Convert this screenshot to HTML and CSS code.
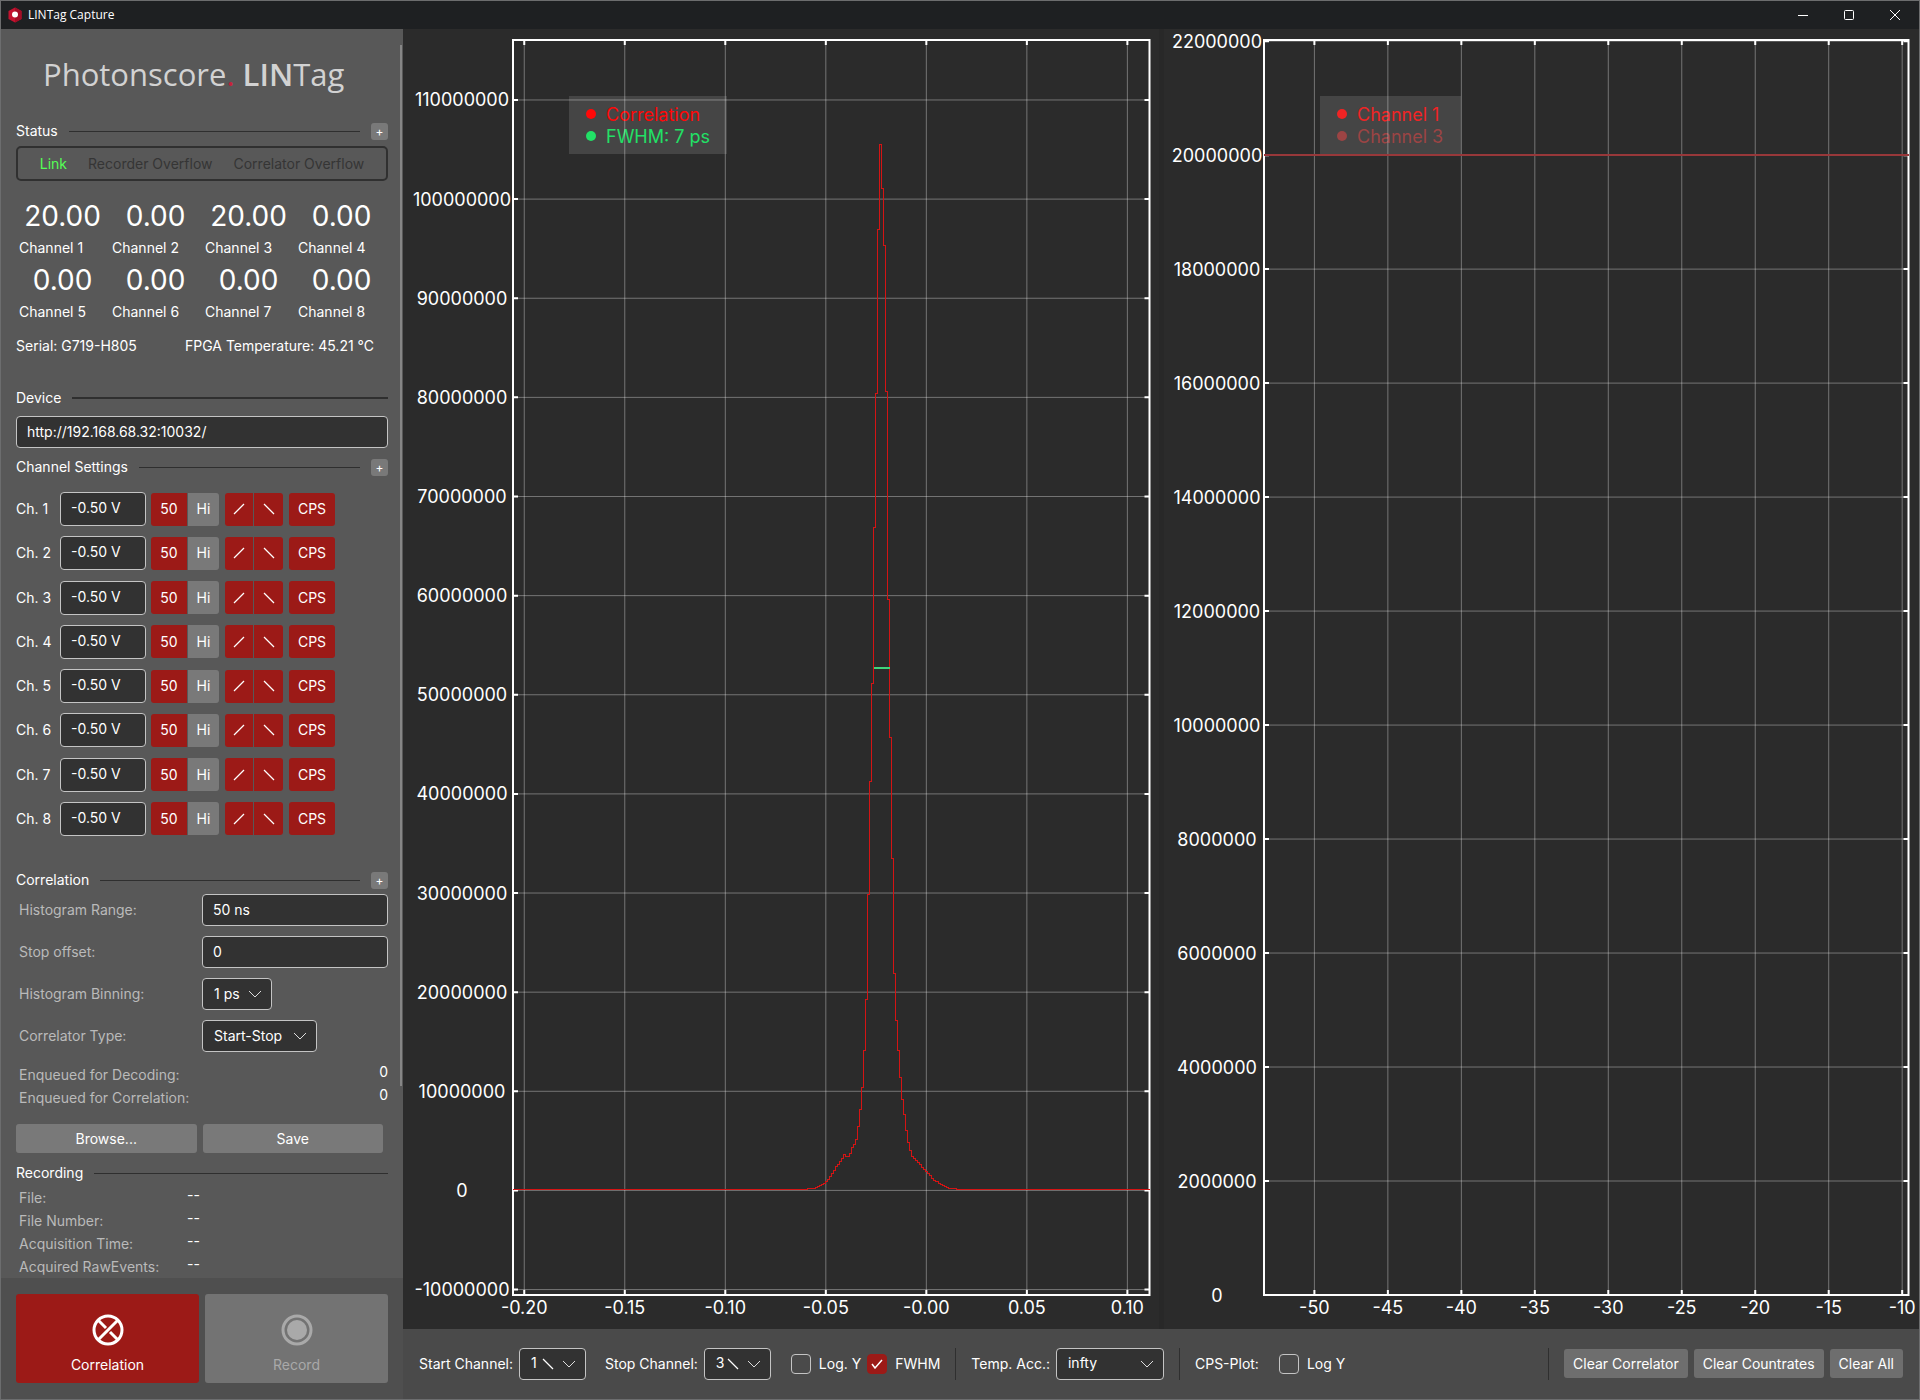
FILE: index.html
```html
<!DOCTYPE html>
<html lang="en">
<head>
    <meta charset="UTF-8">
    <meta name="viewport" content="width=device-width, initial-scale=1.0">
    <title>LINTag Capture</title>
    <link rel="stylesheet" href="styles.css">
</head>
<body>
    <div class="window">
        <header class="titlebar">
            <svg class="app-icon" viewBox="0 0 14 16" aria-hidden="true">
                <path d="M7 0.5 L13.5 4 V12 L7 15.5 L0.5 12 V4 Z" fill="#c4122f"/>
                <path d="M7 0.5 L13.5 4 V12 L7 15.5 Z" fill="#a30d26"/>
                <circle cx="7" cy="7.5" r="3" fill="#fff"/>
            </svg>
            <span class="app-title">LINTag Capture</span>
            <div class="window-controls">
                <button type="button" aria-label="Minimize"><svg viewBox="0 0 12 12"><path d="M1 6.5 H11"/></svg></button>
                <button type="button" aria-label="Maximize"><svg viewBox="0 0 12 12"><rect x="1.5" y="1.5" width="9" height="9" rx="1"/></svg></button>
                <button type="button" aria-label="Close"><svg viewBox="0 0 12 12"><path d="M1 1 L11 11 M11 1 L1 11"/></svg></button>
            </div>
        </header>

        <div class="main">
            <aside class="sidebar">
                <div class="sidebar-scroll">
                    <h1 class="logo">Photonscore<span class="logo-dot">.</span> <b>LIN</b>Tag</h1>

                    <div class="section-head">
                        <h2>Status</h2><hr>
                        <button type="button" class="expand" aria-label="Expand status">+</button>
                    </div>
                    <div class="status-box">
                        <span class="ok">Link</span>
                        <span>Recorder Overflow</span>
                        <span>Correlator Overflow</span>
                    </div>
                    <div class="rates" id="rates"></div>
                    <div class="device-info">
                        <span>Serial: G719-H805</span>
                        <span>FPGA Temperature: 45.21 °C</span>
                    </div>

                    <div class="section-head device-head"><h2><label for="device">Device</label></h2><hr></div>
                    <input class="field device-url" type="text" id="device" value="http://192.168.68.32:10032/">

                    <div class="section-head settings-head">
                        <h2>Channel Settings</h2><hr>
                        <button type="button" class="expand" aria-label="Expand channel settings">+</button>
                    </div>
                    <div class="channels" id="channels"></div>

                    <div class="section-head correlation-head">
                        <h2>Correlation</h2><hr>
                        <button type="button" class="expand" aria-label="Expand correlation">+</button>
                    </div>
                    <div class="settings">
                        <label for="range">Histogram Range:</label>
                        <input class="field" type="text" id="range" value="50 ns">
                        <label for="offset">Stop offset:</label>
                        <input class="field" type="text" id="offset" value="0">
                        <label for="binning">Histogram Binning:</label>
                        <select class="field binning" id="binning"><option>1 ps</option></select>
                        <label for="type">Correlator Type:</label>
                        <select class="field type" id="type"><option>Start-Stop</option></select>
                    </div>
                    <dl class="stats queue">
                        <dt>Enqueued for Decoding:</dt><dd>0</dd>
                        <dt>Enqueued for Correlation:</dt><dd>0</dd>
                    </dl>
                    <div class="file-buttons">
                        <button type="button" class="btn">Browse...</button>
                        <button type="button" class="btn">Save</button>
                    </div>

                    <div class="section-head recording-head"><h2>Recording</h2><hr></div>
                    <dl class="stats recording">
                        <dt>File:</dt><dd>--</dd>
                        <dt>File Number:</dt><dd>--</dd>
                        <dt>Acquisition Time:</dt><dd>--</dd>
                        <dt>Acquired RawEvents:</dt><dd>--</dd>
                    </dl>
                </div>
                <div class="scroll-thumb"></div>

                <div class="actions">
                    <button type="button" class="action active">
                        <svg viewBox="0 0 32 32" aria-hidden="true">
                            <circle cx="16" cy="16" r="14"/>
                            <path d="M6 6 L14 14 M18 18 L26 26 M26 6 L6 26"/>
                        </svg>
                        Correlation
                    </button>
                    <button type="button" class="action" disabled>
                        <svg viewBox="0 0 32 32" aria-hidden="true">
                            <circle cx="16" cy="16" r="14"/>
                            <circle class="dot" cx="16" cy="16" r="10"/>
                        </svg>
                        Record
                    </button>
                </div>
            </aside>

            <main class="content">
                <div class="plots">
                    <svg class="plot" id="correlationPlot" role="img" aria-label="Correlation histogram"></svg>
                    <div class="splitter"></div>
                    <svg class="plot" id="cpsPlot" role="img" aria-label="Count rates"></svg>
                </div>

                <div class="toolbar">
                    <label for="startChannel">Start Channel:</label>
                    <select class="field edge start" id="startChannel"><option>1</option></select>
                    <label for="stopChannel" class="stop-label">Stop Channel:</label>
                    <select class="field edge stop" id="stopChannel"><option>3</option></select>
                    <label class="check log"><input type="checkbox"> Log. Y</label>
                    <label class="check"><input type="checkbox" checked> FWHM</label>
                    <span class="divider"></span>
                    <label for="acc">Temp. Acc.:</label>
                    <select class="field acc" id="acc"><option>infty</option></select>
                    <span class="divider"></span>
                    <span>CPS-Plot:</span>
                    <label class="check cps-log"><input type="checkbox"> Log Y</label>
                    <div class="clear-buttons">
                        <span class="divider"></span>
                        <button type="button" class="btn">Clear Correlator</button>
                        <button type="button" class="btn">Clear Countrates</button>
                        <button type="button" class="btn">Clear All</button>
                    </div>
                </div>
            </main>
        </div>
    </div>
    <script src="script.js"></script>
</body>
</html>
```
FILE: styles.css
```css
* {
    box-sizing: border-box;
}
body {
    margin: 0;
    font-family: Inter, "Liberation Sans", sans-serif;
    font-size: 14px;
    line-height: 20px;
    color: #ffffff;
    background: #2b2b2b;
}
button, input, select {
    font: inherit;
    color: inherit;
}
button {
    border: none;
    padding: 0;
}
h1, h2, dl, dd {
    margin: 0;
    font-weight: 400;
}
.window {
    display: flex;
    flex-direction: column;
    height: 100vh;
    border: 1px solid #6c6d6e;
}

/* title bar */
.titlebar {
    display: flex;
    align-items: center;
    height: 28px;
    padding: 0 7px;
    background: #1e2022;
    font-family: "Open Sans", sans-serif;
    font-size: 12px;
}
.app-icon {
    width: 14px;
    height: 16px;
    margin-right: 6px;
}
.window-controls {
    display: flex;
    margin-left: auto;
}
.window-controls button {
    width: 46px;
    height: 26px;
    background: none;
}
.window-controls button:last-child {
    width: 34px;
    margin-left: 6px;
}
.window-controls svg {
    display: block;
    width: 12px;
    height: 12px;
    margin: 0 auto;
    fill: none;
    stroke: #ffffff;
}

.main {
    display: flex;
    flex: 1;
    min-height: 0;
}

/* sidebar */
.sidebar {
    position: relative;
    display: flex;
    flex-direction: column;
    width: 402px;
    flex-shrink: 0;
    background: #585858;
}
.sidebar-scroll {
    flex: 1;
    min-height: 0;
    overflow: hidden;
    padding: 23px 15px 0;
}
.scroll-thumb {
    position: absolute;
    top: 16px;
    right: 1px;
    width: 2px;
    height: 76%;
    background: #868686;
}
.logo {
    padding-left: 27px;
    font-family: "Open Sans", sans-serif;
    font-size: 31px;
    font-weight: 400;
    line-height: 44px;
    color: #d2d2d2;
}
.logo b {
    font-weight: 600;
}
.logo-dot {
    color: #c8203c;
}
.section-head {
    display: flex;
    align-items: center;
    gap: 11px;
    height: 20px;
    margin-top: 25px;
}
.section-head h2 {
    font-size: 14px;
}
.section-head hr {
    flex: 1;
    height: 1px;
    margin: 0;
    border: none;
    background: #2f2f2f;
}
.section-head.device-head {
    margin-top: 32px;
}
.device-head hr {
    height: 2px;
}
.section-head.settings-head {
    margin-top: 9px;
}
.section-head.correlation-head {
    margin-top: 34px;
}
.section-head.recording-head {
    margin-top: 10px;
}
.expand {
    width: 17px;
    height: 17px;
    border-radius: 3px;
    background: #797979;
    font-size: 12px;
    line-height: 17px;
}
.status-box {
    display: flex;
    align-items: center;
    justify-content: center;
    gap: 21px;
    height: 35px;
    margin-top: 5px;
    border: 2px solid #303030;
    border-radius: 5px;
    color: #353535;
}
.status-box .ok {
    color: #55ff55;
}
.rates {
    display: grid;
    grid-template-columns: repeat(4, 1fr);
    margin-top: 17px;
}
.rate-value {
    font-size: 28px;
    line-height: 36px;
    text-align: center;
}
.rate-name {
    padding-left: 3px;
    line-height: 28px;
}
.device-info {
    display: flex;
    justify-content: space-between;
    margin-top: 10px;
    padding-right: 14px;
}
.field {
    height: 32px;
    padding: 0 10px 1px;
    border: 1px solid #c4c4c4;
    border-radius: 4px;
    background-color: #323232;
}
select.field {
    appearance: none;
    padding-left: 11px;
    background-image: url("data:image/svg+xml,%3Csvg xmlns='http://www.w3.org/2000/svg' width='14' height='8'%3E%3Cpath d='M1 1 L7 7 L13 1' fill='none' stroke='%23dddddd'/%3E%3C/svg%3E");
    background-repeat: no-repeat;
    background-position: right 9px center;
}
.device-url {
    width: 100%;
    margin-top: 8px;
}
.channels {
    display: flex;
    flex-direction: column;
    justify-content: space-between;
    height: 344px;
    margin-top: 15px;
}
.channel {
    display: flex;
    align-items: center;
}
.channel label {
    width: 44px;
}
.channel .field {
    width: 86px;
    height: 34px;
    padding-bottom: 3px;
    margin-right: 5px;
}
.toggle {
    height: 33px;
    background: #9c1a17;
}
.toggle svg {
    display: block;
    width: 12px;
    height: 12px;
    margin: 0 auto;
    stroke: #ffffff;
    stroke-width: 1.3;
}
.toggle.left {
    border-radius: 3px 0 0 3px;
    margin-right: 1px;
}
.toggle.right {
    border-radius: 0 3px 3px 0;
    margin-right: 6px;
}
.toggle.off {
    background: #797979;
}
.toggle.ohm {
    width: 36px;
}
.toggle.hi {
    width: 31px;
}
.toggle.slope {
    width: 28px;
}
.toggle.slope.right {
    width: 29px;
}
.toggle.cps {
    width: 46px;
    border-radius: 3px;
}
.settings {
    display: grid;
    grid-template-columns: 183px 1fr;
    row-gap: 10px;
    align-items: center;
    justify-items: start;
    margin-top: 4px;
    padding-left: 3px;
}
.settings label, .stats dt {
    color: #bababa;
}
.settings input {
    width: 100%;
}
.binning {
    width: 70px;
}
.type {
    width: 115px;
}
.stats {
    display: grid;
    padding-left: 3px;
    line-height: 23px;
}
.stats dd {
    line-height: 17px;
}
.queue {
    grid-template-columns: 1fr auto;
    margin-top: 11px;
}
.recording {
    grid-template-columns: 168px 1fr;
    margin-top: 3px;
}
.btn {
    height: 29px;
    padding: 0 9px;
    border-radius: 3px;
    background: #797979;
}
.file-buttons {
    display: grid;
    grid-template-columns: 1fr 1fr;
    gap: 6px;
    margin-top: 15px;
    padding-right: 5px;
}
.actions {
    display: grid;
    grid-template-columns: 1fr 1fr;
    gap: 6px;
    padding: 16px 15px;
    background: #4f4f4f;
}
.action {
    display: flex;
    flex-direction: column;
    align-items: center;
    justify-content: flex-end;
    gap: 9px;
    height: 89px;
    padding-bottom: 8px;
    border-radius: 3px;
    background: #737373;
    color: #a9a9a9;
}
.action.active {
    background: #9c1a17;
    color: #ffffff;
}
.action svg {
    width: 32px;
    height: 32px;
    fill: none;
    stroke: currentColor;
    stroke-width: 3;
}
.action .dot {
    fill: currentColor;
    stroke: none;
}

/* plots */
.content {
    display: flex;
    flex-direction: column;
    flex: 1;
    min-width: 0;
}
.plots {
    display: flex;
    flex: 1;
    min-height: 0;
}
.plot {
    display: block;
    flex: 1;
    min-width: 0;
    height: 100%;
    background: #2b2b2b;
    font-size: 18px;
}
.splitter {
    width: 5px;
    background: #282828;
}
.frame {
    fill: none;
    stroke: #ffffff;
    stroke-width: 2;
}
.tick {
    stroke: #ffffff;
    stroke-width: 2;
}
.grid {
    stroke: #ffffff;
    stroke-opacity: 0.35;
}
.tick-label {
    fill: #ffffff;
    text-anchor: middle;
    dominant-baseline: central;
}
.legend-box {
    fill: #454545;
}
.legend-text {
    dominant-baseline: central;
}
.series {
    fill: none;
    shape-rendering: crispEdges;
}

/* bottom toolbar */
.toolbar {
    display: flex;
    align-items: center;
    height: 70px;
    padding: 0 16px 1px;
    background: #4a4a4a;
    white-space: nowrap;
}
.toolbar .field {
    margin-left: 6px;
}
.start, .stop {
    width: 67px;
}
select.edge {
    background-image: url("data:image/svg+xml,%3Csvg xmlns='http://www.w3.org/2000/svg' width='14' height='8'%3E%3Cpath d='M1 1 L7 7 L13 1' fill='none' stroke='%23dddddd'/%3E%3C/svg%3E"), url("data:image/svg+xml,%3Csvg xmlns='http://www.w3.org/2000/svg' width='12' height='12'%3E%3Cpath d='M1 1 L11 11' fill='none' stroke='%23ffffff' stroke-width='1.3'/%3E%3C/svg%3E");
    background-position: right 9px center, 22px center;
}
.stop-label {
    margin-left: 19px;
}
.acc {
    width: 108px;
}
.check {
    display: flex;
    align-items: center;
    gap: 8px;
    margin-right: 6px;
}
.check.log, .check.cps-log {
    margin-left: 20px;
}
.check input {
    appearance: none;
    width: 20px;
    height: 20px;
    margin: 0;
    border: 1px solid #c4c4c4;
    border-radius: 4px;
}
.check input:checked {
    border-color: #9c1a17;
    background: #9c1a17 url("data:image/svg+xml,%3Csvg xmlns='http://www.w3.org/2000/svg' width='12' height='10'%3E%3Cpath d='M1 5 L4 9 L11 1' fill='none' stroke='%23ffffff' stroke-width='1.5'/%3E%3C/svg%3E") no-repeat center;
}
.divider {
    width: 1px;
    height: 32px;
    margin: 0 15px;
    background: #2f2f2f;
}
.check + .divider {
    margin-left: 9px;
}
.clear-buttons {
    display: flex;
    align-items: center;
    gap: 6px;
    margin-left: auto;
}
.clear-buttons .divider {
    margin: 0 9px 0 0;
}
.clear-buttons .btn {
    background: #6e6e6e;
}
```
FILE: script.js
```js
const rates = [20, 0, 20, 0, 0, 0, 0, 0];

document.getElementById('rates').innerHTML = rates.map((rate, i) => `
    <div>
        <div class="rate-value">${rate.toFixed(2)}</div>
        <div class="rate-name">Channel ${i + 1}</div>
    </div>`).join('');

document.getElementById('channels').innerHTML = rates.map((rate, i) => `
    <div class="channel">
        <label for="level${i + 1}">Ch. ${i + 1}</label>
        <input class="field" type="text" id="level${i + 1}" value="-0.50 V">
        <button type="button" class="toggle left ohm">50</button>
        <button type="button" class="toggle right hi off">Hi</button>
        <button type="button" class="toggle left slope" aria-label="Rising edge"><svg viewBox="0 0 12 12"><path d="M1 11 L11 1"/></svg></button>
        <button type="button" class="toggle right slope" aria-label="Falling edge"><svg viewBox="0 0 12 12"><path d="M1 1 L11 11"/></svg></button>
        <button type="button" class="toggle cps">CPS</button>
    </div>`).join('');

// histogram bins in millions of counts, first bin starts at binStart
const binStart = -0.0622;
const binWidth = 0.001;
const bins = [
    0.12, 0.13, 0.14, 0.15, 0.17, 0.2, 0.24, 0.3, 0.37, 0.45, 0.55, 0.7, 0.9,
    1.1, 1.4, 1.75, 2.05, 2.4, 2.65, 2.9, 3.2, 3.6, 3.4, 3.45, 3.75, 4.3,
    4.6, 5.1, 6.4, 8.15, 10.4, 14.1, 19.3, 29.9, 41.3, 51.1, 66.9, 80.4, 96.9,
    105.5, 101.1, 95.3, 80.6, 59.6, 45.7, 33.5, 21.9, 17.1, 14.1, 11.4, 9.2,
    7.7, 6.0, 4.8, 4.0, 3.4, 3.25, 3.0, 2.8, 2.6, 2.3, 2.1, 1.9, 1.7, 1.5,
    1.25, 1.05, 0.85, 0.7, 0.55, 0.45, 0.37, 0.3, 0.24, 0.2, 0.17, 0.15, 0.13
];

const correlation = {
    margin: { left: 110, right: 9, top: 11, bottom: 34 },
    labelOffset: 51,
    x: [-0.2056, 0.111],
    y: [-10.55, 116.05],
    xTicks: [-0.2, -0.15, -0.1, -0.05, 0, 0.05, 0.1],
    xFormat: v => v === 0 ? '-0.00' : v.toFixed(2),
    yTicks: [-10, 0, 10, 20, 30, 40, 50, 60, 70, 80, 90, 100, 110],
    legend: { width: 158, items: [['Correlation', '#ff0808'], ['FWHM: 7 ps', '#22e066']] },
    draw(sx, sy) {
        let d = `M${sx(this.x[0])} ${sy(0.1)} H${sx(binStart)}`;
        bins.forEach((v, i) => {
            d += ` V${sy(v)} H${sx(binStart + (i + 1) * binWidth)}`;
        });
        d += ` V${sy(0.1)} H${sx(this.x[1])}`;
        return `<path class="series" d="${d}" stroke="#d41414"/>
            <path class="series" d="M${sx(-0.0262)} ${sy(52.7)} H${sx(-0.0182)}" stroke="#3fd47c" stroke-width="2"/>`;
    }
};

const cps = {
    margin: { left: 100, right: 11, top: 11, bottom: 34 },
    labelOffset: 47,
    x: [-53.43, -9.57],
    y: [0, 22.02],
    xTicks: [-50, -45, -40, -35, -30, -25, -20, -15, -10],
    xFormat: v => v,
    yTicks: [0, 2, 4, 6, 8, 10, 12, 14, 16, 18, 20, 22],
    legend: { width: 141, items: [['Channel 1', '#f02424'], ['Channel 3', '#9c4444']] },
    draw(sx, sy) {
        return `<path class="series" d="M${sx(this.x[0])} ${sy(20)} H${sx(this.x[1])}" stroke="#98383a" stroke-width="2"/>`;
    }
};

function drawPlot(id, plot) {
    const svg = document.getElementById(id);
    const { width, height } = svg.getBoundingClientRect();
    const left = plot.margin.left;
    const top = plot.margin.top;
    const right = width - plot.margin.right;
    const bottom = height - plot.margin.bottom;
    const sx = v => left + (v - plot.x[0]) / (plot.x[1] - plot.x[0]) * (right - left);
    const sy = v => bottom - (v - plot.y[0]) / (plot.y[1] - plot.y[0]) * (bottom - top);

    // legend sits below the grid lines
    const lx = left + 56;
    const ly = top + 56;
    let out = `<rect class="legend-box" x="${lx}" y="${ly}" width="${plot.legend.width}" height="58"/>`;
    plot.legend.items.forEach(([name, color], i) => {
        const y = ly + 18 + i * 22;
        out += `<circle cx="${lx + 22}" cy="${y}" r="5" fill="${color}"/>
            <text class="legend-text" x="${lx + 37}" y="${y}" fill="${color}">${name}</text>`;
    });

    let ticks = '';
    plot.xTicks.forEach(v => {
        const x = sx(v);
        out += `<line class="grid" x1="${x}" x2="${x}" y1="${top}" y2="${bottom}"/>`;
        ticks += `<path class="tick" d="M${x} ${top} v5 M${x} ${bottom} v-5"/>
            <text class="tick-label" x="${x}" y="${bottom + 12}">${plot.xFormat(v)}</text>`;
    });
    plot.yTicks.forEach(v => {
        const y = sy(v);
        out += `<line class="grid" x1="${left}" x2="${right}" y1="${y}" y2="${y}"/>`;
        ticks += `<path class="tick" d="M${left} ${y} h5 M${right} ${y} h-5"/>
            <text class="tick-label" x="${left - plot.labelOffset}" y="${y}">${v * 1000000}</text>`;
    });

    out += ticks;
    out += `<rect class="frame" x="${left}" y="${top}" width="${right - left}" height="${bottom - top}"/>`;
    out += plot.draw(sx, sy);
    svg.innerHTML = out;
}

function drawAll() {
    drawPlot('correlationPlot', correlation);
    drawPlot('cpsPlot', cps);
}

drawAll();
window.addEventListener('resize', drawAll);
```
